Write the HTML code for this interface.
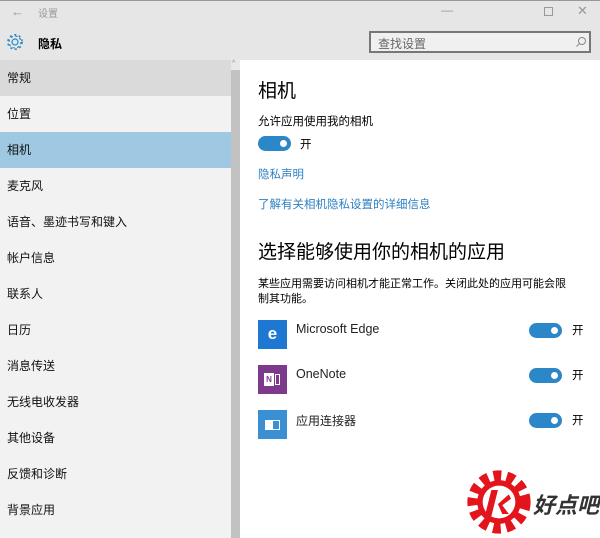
<!DOCTYPE html><html><head><meta charset="utf-8"><style>
*{margin:0;padding:0;box-sizing:border-box}
body{width:600px;height:538px;overflow:hidden;background:#fff;font-family:"Liberation Sans","Noto Sans CJK SC",sans-serif;color:#000;position:relative}
.a{position:absolute;white-space:nowrap}
.tog{position:absolute;width:33px;height:15px;border-radius:8px;background:#2b87c8}
.tog:after{content:"";position:absolute;right:4px;top:4px;width:7px;height:7px;border-radius:50%;background:#fff}
.side div{height:36px;line-height:36px;padding-left:7px;font-size:12px;color:#111}
.lk{color:#2d7fc0;font-size:11.5px}
</style></head><body>
<div class="a" style="left:0;top:0;width:600px;height:60px;background:#e6e6e6"></div>
<div class="a" style="left:0;top:0;width:600px;height:1px;background:#999"></div>
<div class="a" style="left:11px;top:4px;font-size:13px;color:#999">←</div>
<div class="a" style="left:38px;top:5px;font-size:10px;color:#999">设置</div>
<div class="a" style="left:441px;top:3px;font-size:12px;color:#999">—</div>
<div class="a" style="left:544px;top:7px;width:9px;height:9px;border:1px solid #999"></div>
<div class="a" style="left:577px;top:3px;font-size:13px;color:#999">✕</div>
<svg class="a" style="left:6px;top:33px" width="18" height="18" viewBox="0 0 18 18"><circle cx="9" cy="9" r="3" fill="none" stroke="#2b87c8" stroke-width="1.2"/><circle cx="9" cy="9" r="6" fill="none" stroke="#2b87c8" stroke-width="1.2" stroke-dasharray="2.4 2.3"/><circle cx="9" cy="9" r="7.2" fill="none" stroke="#2b87c8" stroke-width="1.5" stroke-dasharray="2 2.7"/></svg>
<div class="a" style="left:38px;top:35px;font-size:12px;font-weight:bold">隐私</div>
<div class="a" style="left:369px;top:31px;width:222px;height:22px;border:2px solid #777;background:#f0f0f0"></div>
<div class="a" style="left:378px;top:35px;font-size:12px;color:#666">查找设置</div>
<svg class="a" style="left:575px;top:36px" width="12" height="12" viewBox="0 0 12 12"><circle cx="7" cy="5" r="3.5" fill="none" stroke="#888"/><path d="M4.5 7.5 L1.5 10.5" stroke="#888"/></svg>
<div class="a side" style="left:0;top:60px;width:231px;height:478px;background:#f2f2f2">
<div style="background:#dadada">常规</div><div>位置</div><div style="background:#9fc9e3">相机</div><div>麦克风</div><div>语音、墨迹书写和键入</div><div>帐户信息</div><div>联系人</div><div>日历</div><div>消息传送</div><div>无线电收发器</div><div>其他设备</div><div>反馈和诊断</div><div>背景应用</div></div>
<div class="a" style="left:231px;top:60px;width:9px;height:478px;background:#e8e8e8"></div>
<div class="a" style="left:231px;top:70px;width:9px;height:468px;background:#c2c2c2"></div>
<div class="a" style="left:232px;top:60px;font-size:7px;color:#888">^</div>
<div class="a" style="left:258px;top:76px;font-size:19px">相机</div>
<div class="a" style="left:258px;top:113px;font-size:11.5px">允许应用使用我的相机</div>
<div class="tog" style="left:258px;top:136px"></div>
<div class="a" style="left:300px;top:136px;font-size:11.5px">开</div>
<div class="a lk" style="left:258px;top:166px">隐私声明</div>
<div class="a lk" style="left:258px;top:196px">了解有关相机隐私设置的详细信息</div>
<div class="a" style="left:258px;top:237px;font-size:19px">选择能够使用你的相机的应用</div>
<div class="a" style="left:258px;top:277px;font-size:11px;line-height:15px;white-space:normal;width:324px">某些应用需要访问相机才能正常工作。关闭此处的应用可能会限<br>制其功能。</div>
<div class="a" style="left:258px;top:320px;width:29px;height:29px;background:#1e78d2;color:#fff;font-weight:bold;font-size:17px;text-align:center;line-height:28px">e</div>
<div class="a" style="left:258px;top:365px;width:29px;height:29px;background:#7d3a8c"><div style="position:absolute;left:6px;top:8px;width:10px;height:13px;background:#fff;color:#7d3a8c;font-size:8px;font-weight:bold;text-align:center;line-height:13px">N</div><div style="position:absolute;left:17px;top:9px;width:5px;height:11px;border:1px solid #fff"></div></div>
<div class="a" style="left:258px;top:410px;width:29px;height:29px;background:#3b8fd3"><div style="position:absolute;left:7px;top:10px;width:15px;height:10px;border:1px solid #fff"><div style="width:7px;height:8px;background:#fff"></div></div></div>
<div class="a" style="left:296px;top:322px;font-size:12.5px;color:#222">Microsoft Edge</div>
<div class="a" style="left:296px;top:367px;font-size:12.5px;color:#222">OneNote</div>
<div class="a" style="left:296px;top:412px;font-size:12px;color:#222">应用连接器</div>
<div class="tog" style="left:529px;top:323px"></div><div class="a" style="left:572px;top:322px;font-size:11.5px">开</div>
<div class="tog" style="left:529px;top:368px"></div><div class="a" style="left:572px;top:367px;font-size:11.5px">开</div>
<div class="tog" style="left:529px;top:413px"></div><div class="a" style="left:572px;top:412px;font-size:11.5px">开</div>
<svg class="a" style="left:463px;top:466px" width="72" height="72" viewBox="0 0 66 66"><circle cx="33" cy="33" r="24" fill="none" stroke="#e3141b" stroke-width="10" stroke-dasharray="7 5"/><circle cx="33" cy="33" r="20" fill="#e3141b"/><circle cx="33" cy="33" r="15" fill="#fff"/><path d="M26 22 L32 22 L26 46 L20 46 Z M32 35 L42 26 L44 30 L36 36 L42 44 L36 44 Z" fill="#e3141b"/></svg>
<div class="a" style="left:533px;top:488px;font-size:22px;font-weight:bold;font-style:italic;color:#333">好点吧</div>
</body></html>
